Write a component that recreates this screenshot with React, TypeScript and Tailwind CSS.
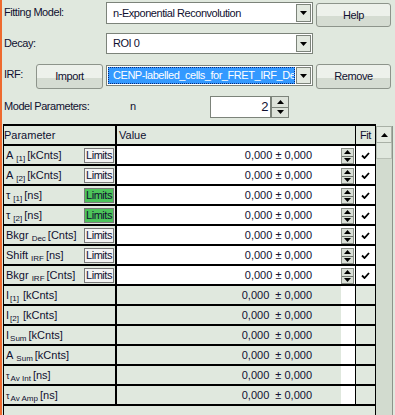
import React from 'react';

// Parameter rows of the fit table
interface ParamRow {
  main: string;
  sub: string;
  unit: string;
  tight?: boolean;
  smallMain?: boolean;
  limits?: 'grey' | 'green';
}

const rows: ParamRow[] = [
  { main: 'A', sub: '[1]', unit: '[kCnts]', limits: 'grey' },
  { main: 'A', sub: '[2]', unit: '[kCnts]', limits: 'grey' },
  { main: 'τ', sub: '[1]', unit: '[ns]', limits: 'green' },
  { main: 'τ', sub: '[2]', unit: '[ns]', limits: 'green' },
  { main: 'Bkgr', sub: 'Dec', unit: '[Cnts]', limits: 'grey' },
  { main: 'Shift', sub: 'IRF', unit: '[ns]', limits: 'grey' },
  { main: 'Bkgr', sub: 'IRF', unit: '[Cnts]', limits: 'grey' },
  { main: 'I', sub: '[1]', unit: '[kCnts]', tight: true },
  { main: 'I', sub: '[2]', unit: '[kCnts]', tight: true },
  { main: 'I', sub: 'Sum', unit: '[kCnts]', tight: true },
  { main: 'A', sub: 'Sum', unit: '[kCnts]' },
  { main: 'τ', sub: 'Av Int', unit: '[ns]', tight: true, smallMain: true },
  { main: 'τ', sub: 'Av Amp', unit: '[ns]', tight: true, smallMain: true },
];

const Tri = ({ up }: { up?: boolean }) => (
  <svg width="7" height="4" viewBox="0 0 7 4">
    <path d={up ? 'M0 4 L3.5 0 L7 4Z' : 'M0 0 L7 0 L3.5 4Z'} fill="#000" />
  </svg>
);

const Check = () => (
  <svg width="9" height="7" viewBox="0 0 9 7">
    <path d="M1 3.5 L3.5 6 L8 1" stroke="#000" strokeWidth="1.8" fill="none" />
  </svg>
);

const Button = ({ label, className }: { label: string; className: string }) => (
  <div
    className={`flex items-center justify-center rounded-[3px] border border-[#8d948b] bg-linear-to-b from-[#edf1eb] from-55% to-[#d5dcd2] to-55% text-[#101030] ${className}`}
  >
    {label}
  </div>
);

const Combo = ({ text, selected, className }: { text: string; selected?: boolean; className: string }) => (
  <div className={`flex items-stretch border border-[#7c837a] bg-white ${className}`}>
    <div className="flex min-w-0 flex-1 items-center overflow-hidden py-[1px] pl-[1px]">
      {selected ? (
        <div className="flex h-full min-w-0 flex-1 items-center overflow-hidden border border-dotted border-[#0a2a7a] bg-[#3399ff] pl-[4px] text-white">
          <span className="whitespace-nowrap">{text}</span>
        </div>
      ) : (
        <span className="whitespace-nowrap pl-[5px] text-[#101030]">{text}</span>
      )}
    </div>
    <div className="my-[1px] mr-[1px] ml-[1px] flex w-[15px] items-center justify-center border border-[#7c837a] bg-[#e3e9e0]">
      <Tri />
    </div>
  </div>
);

const SpinSmall = () => (
  <div className="flex h-[16px] w-[13px] flex-col border border-[#8a8f88] bg-[#d9dfd6]">
    <div className="flex flex-1 items-center justify-center border-b border-[#6d726b]">
      <Tri up />
    </div>
    <div className="flex flex-1 items-center justify-center">
      <Tri />
    </div>
  </div>
);

const ParamLabel = ({ row }: { row: ParamRow }) => (
  <div className="flex items-baseline whitespace-nowrap pt-[1px] pl-[2px]">
    <span className={row.smallMain ? 'text-[9px]' : ''}>{row.main}</span>
    <span className={`relative top-[2px] text-[8px] ${row.tight ? 'ml-[1px]' : 'ml-[3px]'}`}>{row.sub}</span>
    <span className={row.tight && row.sub.startsWith('[') ? 'ml-[4px]' : 'ml-[2px]'}>{row.unit}</span>
  </div>
);

export default function App() {
  return (
    <div className="flex h-[415px] w-[395px] flex-col overflow-hidden border-l-2 border-[#ee6a2e] bg-[#e0e8de] font-['Liberation_Sans',Arial,sans-serif] text-[11px] tracking-[-0.45px] text-[#101030]">
      {/* Fitting model */}
      <div className="flex h-[31px] items-start">
        <div className="flex h-[24px] w-[104px] items-center pl-[2px]">Fitting Model:</div>
        <Combo text="n-Exponential Reconvolution" className="mt-[2px] h-[22px] w-[207px]" />
        <Button label="Help" className="mt-[3px] ml-[3px] h-[24px] w-[75px]" />
      </div>

      {/* Decay */}
      <div className="flex h-[31px] items-start">
        <div className="flex h-[24px] w-[104px] items-center pl-[2px]">Decay:</div>
        <Combo text="ROI 0" className="mt-[2px] h-[21px] w-[207px]" />
      </div>

      {/* IRF */}
      <div className="flex h-[31px] items-start">
        <div className="flex h-[25px] w-[34px] items-center pl-[2px]">IRF:</div>
        <Button label="Import" className="mt-[2px] h-[25px] w-[67px]" />
        <Combo text="CENP-labelled_cells_for_FRET_IRF_De" selected className="mt-[3px] ml-[3px] h-[21px] w-[207px]" />
        <Button label="Remove" className="mt-[2px] ml-[3px] h-[25px] w-[75px]" />
      </div>

      {/* Model parameters */}
      <div className="flex h-[31px] items-start">
        <div className="flex h-[26px] w-[128px] items-center pl-[2px]">Model Parameters:</div>
        <div className="flex h-[26px] w-[80px] items-center">n</div>
        <div className="mt-[3px] flex h-[22px] w-[61px] items-center justify-end border border-[#7c837a] bg-white pr-[2px] text-[13px]">
          2
        </div>
        <div className="mt-[3px] flex h-[22px] w-[18px] flex-col border border-[#7c837a] bg-[#dde3da]">
          <div className="flex flex-1 items-center justify-center border-b border-[#7c837a]">
            <Tri up />
          </div>
          <div className="flex flex-1 items-center justify-center">
            <Tri />
          </div>
        </div>
      </div>

      {/* Parameter table */}
      <div className="ml-[1px] flex flex-1 tracking-normal">
        <div className="flex w-[373px] flex-col border-x border-t-2 border-black">
          <div className="flex h-[20px] border-b-2 border-black">
            <div className="flex w-[113px] items-center border-r-2 border-black">Parameter</div>
            <div className="flex w-[239px] items-center border-r border-black pl-[2px]">Value</div>
            <div className="flex w-[19px] items-center justify-center tracking-[-0.45px]">Fit</div>
          </div>
          {rows.map((row, i) => {
            const editable = !!row.limits;
            return (
              <div key={i} className="flex h-[20px] border-b-2 border-black">
                <div className="flex w-[113px] items-start justify-between border-r-2 border-black">
                  <ParamLabel row={row} />
                  {row.limits && (
                    <div
                      className={`mt-[2px] mr-[1px] flex h-[15px] w-[30px] shrink-0 items-center justify-center border border-[#7a7a7a] tracking-[-0.45px] ${
                        row.limits === 'green' ? 'bg-[#4cc45a]' : 'bg-[#f3f3f3]'
                      }`}
                    >
                      Limits
                    </div>
                  )}
                </div>
                {editable ? (
                  <div className="flex w-[239px] items-start justify-end border-r border-black bg-white pr-[1px]">
                    <span className="self-center">0,000 ± 0,000</span>
                    <div className="mt-[2px] ml-[29px]">
                      <SpinSmall />
                    </div>
                  </div>
                ) : (
                  <div className="flex w-[239px] items-stretch justify-end border-r border-black">
                    <span className="self-center whitespace-pre">0,000  ± 0,000</span>
                    <div className="ml-[29px] w-[14px] bg-white" />
                  </div>
                )}
                <div className={`flex w-[19px] items-center justify-center ${editable ? 'bg-white' : ''}`}>
                  {editable && <Check />}
                </div>
              </div>
            );
          })}
        </div>

        {/* Scrollbar */}
        <div className="mt-[2px] flex w-[17px] flex-col border-r border-[#8d948b] bg-[#d2dbcf]">
          <div className="flex h-[17px] items-center justify-center border border-[#a9b1a6] bg-[#e3eae0]">
            <Tri up />
          </div>
          <div className="h-[16px] border-x border-b border-[#b9c1b6] bg-[#e0e8de]" />
        </div>
      </div>
    </div>
  );
}
